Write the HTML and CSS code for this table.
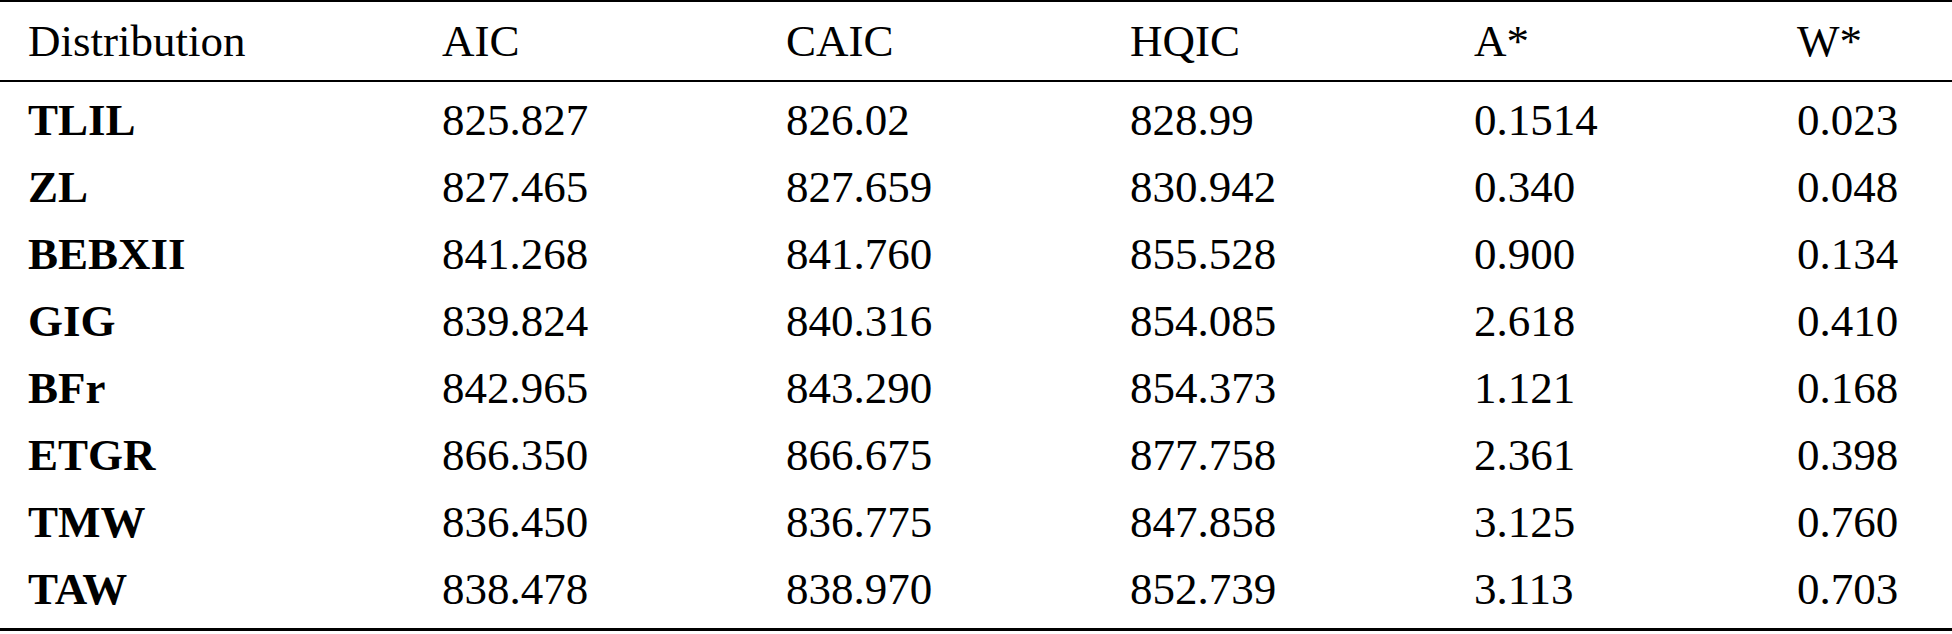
FILE: index.html
```html
<!DOCTYPE html>
<html lang="en">
<head>
    <meta charset="UTF-8">
    <meta name="viewport" content="width=device-width, initial-scale=1.0">
    <title>Goodness of fit</title>
    <link rel="stylesheet" href="styles.css">
</head>
<body>
    <table class="fit-table">
        <colgroup>
            <col class="col-name">
            <col class="col-num">
            <col class="col-num">
            <col class="col-num">
            <col class="col-a">
            <col class="col-w">
        </colgroup>
        <thead>
            <tr>
                <th>Distribution</th>
                <th>AIC</th>
                <th>CAIC</th>
                <th>HQIC</th>
                <th>A*</th>
                <th>W*</th>
            </tr>
        </thead>
        <tbody>
            <tr><td class="dist">TLIL</td><td>825.827</td><td>826.02</td><td>828.99</td><td>0.1514</td><td>0.023</td></tr>
            <tr><td class="dist">ZL</td><td>827.465</td><td>827.659</td><td>830.942</td><td>0.340</td><td>0.048</td></tr>
            <tr><td class="dist">BEBXII</td><td>841.268</td><td>841.760</td><td>855.528</td><td>0.900</td><td>0.134</td></tr>
            <tr><td class="dist">GIG</td><td>839.824</td><td>840.316</td><td>854.085</td><td>2.618</td><td>0.410</td></tr>
            <tr><td class="dist">BFr</td><td>842.965</td><td>843.290</td><td>854.373</td><td>1.121</td><td>0.168</td></tr>
            <tr><td class="dist">ETGR</td><td>866.350</td><td>866.675</td><td>877.758</td><td>2.361</td><td>0.398</td></tr>
            <tr><td class="dist">TMW</td><td>836.450</td><td>836.775</td><td>847.858</td><td>3.125</td><td>0.760</td></tr>
            <tr><td class="dist">TAW</td><td>838.478</td><td>838.970</td><td>852.739</td><td>3.113</td><td>0.703</td></tr>
        </tbody>
    </table>
</body>
</html>
```

FILE: styles.css
```css
* {
    margin: 0;
    padding: 0;
    box-sizing: border-box;
}

body {
    background: #ffffff;
    color: #000000;
    font-family: 'Liberation Serif', 'Times New Roman', serif;
    font-size: 45px;
}

.fit-table {
    width: 1952px;
    border-collapse: collapse;
    table-layout: fixed;
    border-top: 2px solid #000;
    border-bottom: 3px solid #000;
}

.col-name { width: 414px; }
.col-num { width: 344px; }
.col-a { width: 323px; }
.col-w { width: 183px; }

th,
td {
    text-align: left;
    font-weight: normal;
    padding: 0 0 0 28px;
    white-space: nowrap;
}

thead th {
    height: 78px;
    line-height: 78px;
    border-bottom: 2px solid #000;
}

tbody td {
    height: 67px;
    line-height: 67px;
}

tbody tr:first-child td {
    padding-top: 5px;
    height: 72px;
}

tbody tr:last-child td {
    padding-bottom: 5px;
    height: 72px;
}

.dist {
    font-weight: bold;
}
```
